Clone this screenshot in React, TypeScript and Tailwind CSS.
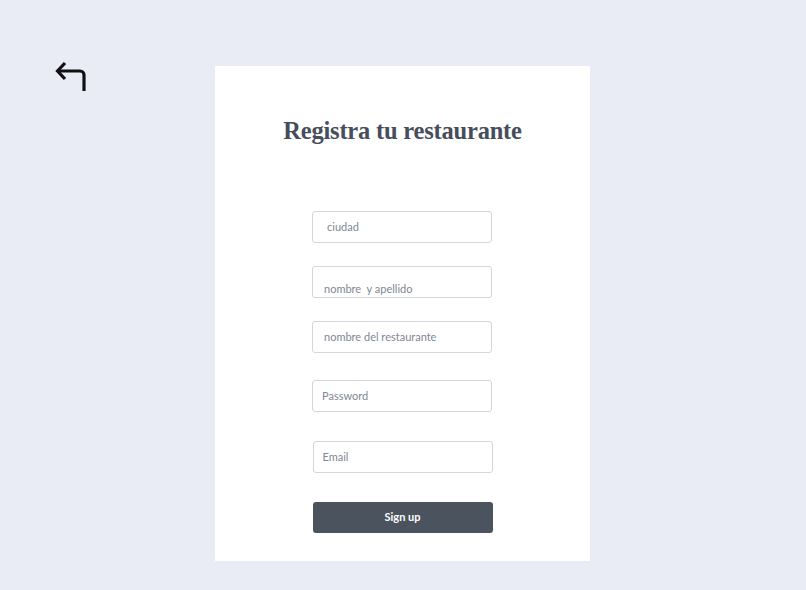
import React from "react";

function BackIcon() {
  return (
    <svg width="45" height="42" viewBox="0 0 45 42" fill="none" stroke="#111" strokeWidth="3.2" strokeLinecap="butt" strokeLinejoin="miter">
      <polyline points="15 8 7.5 16 15 24" />
      <path d="M7.5 16H30a4 4 0 0 1 4 4V36" />
    </svg>
  );
}

const inputCls =
  "block w-[180px] h-[32px] border border-[#d3d6dc] rounded-[3px] bg-white text-[11px] text-[#4b535e] placeholder:text-[#7f8794] outline-none";

export default function App() {
  return (
    <div className="w-full h-[590px] bg-[#e9ecf5] flex" style={{ fontFamily: "Lato, 'Open Sans', sans-serif" }}>
      <div className="w-[215px] pl-[50px] pt-[55px]">
        <BackIcon />
      </div>
      <div className="w-[375px] h-[495px] mt-[66px] bg-white flex flex-col items-center">
        <h1
          className="mt-[47px] text-[24.5px] font-bold text-[#464d5b] tracking-[-0.2px]"
          style={{ fontFamily: "'Liberation Serif', 'DejaVu Serif', serif" }}
        >
          Registra tu restaurante
        </h1>
        <div className="mt-[61px] flex flex-col items-center">
          <input className={`${inputCls} pl-[14px] -ml-[1px]`} placeholder="ciudad" />
          <input className={`${inputCls} mt-[23px] pl-[11px] pt-[14px] -ml-[1px]`} placeholder="nombre  y apellido" />
          <input className={`${inputCls} mt-[23px] pl-[11px] -ml-[1px]`} placeholder="nombre del restaurante" />
          <input className={`${inputCls} mt-[27px] pl-[9px] -ml-[1px]`} placeholder="Password" />
          <input className={`${inputCls} mt-[29px] pl-[9px]`} placeholder="Email" />
          <button className="mt-[29px] w-[180px] h-[31px] rounded-[3px] bg-[#4b535e] text-white text-[11px] font-bold">
            Sign up
          </button>
        </div>
      </div>
    </div>
  );
}
